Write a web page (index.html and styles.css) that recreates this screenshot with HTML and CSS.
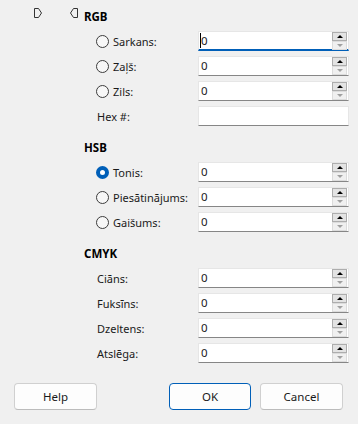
FILE: index.html
```html
<!DOCTYPE HTML>
<html>
	<head>
		<title>Color</title>
		<link rel="stylesheet" href="styles.css">
	</head>
	<body>
		<div class="dialog">
			<div class="section">
				<div class="heading top">
					<svg class="marker" width="8" height="10" viewBox="0 0 8 10"><path d="M0.5 0.5 H4.5 L7.5 5 L4.5 9.5 H0.5 Z" fill="none" stroke="#333" stroke-width="1"/></svg>
					<svg class="marker second" width="8" height="10" viewBox="0 0 8 10"><path d="M7.5 0.5 H3.5 L0.5 5 L3.5 9.5 H7.5 Z" fill="none" stroke="#333" stroke-width="1"/></svg>
					<span>RGB</span>
				</div>
				<div class="row">
					<div class="label"><span class="radio"></span>Sarkans:</div>
					<div class="field focus"><span class="caret"></span><span class="value">0</span><span class="spin"><span class="up"></span><span class="down"></span></span></div>
				</div>
				<div class="row">
					<div class="label"><span class="radio"></span>Zaļš:</div>
					<div class="field"><span class="value">0</span><span class="spin"><span class="up"></span><span class="down"></span></span></div>
				</div>
				<div class="row">
					<div class="label"><span class="radio"></span>Zils:</div>
					<div class="field"><span class="value">0</span><span class="spin"><span class="up"></span><span class="down"></span></span></div>
				</div>
				<div class="row">
					<div class="label plain">Hex #:</div>
					<div class="field"><span class="value"></span></div>
				</div>
			</div>

			<div class="section">
				<div class="heading"><span>HSB</span></div>
				<div class="row">
					<div class="label"><span class="radio on"></span>Tonis:</div>
					<div class="field"><span class="value">0</span><span class="spin"><span class="up"></span><span class="down"></span></span></div>
				</div>
				<div class="row">
					<div class="label"><span class="radio"></span>Piesātinājums:</div>
					<div class="field"><span class="value">0</span><span class="spin"><span class="up"></span><span class="down"></span></span></div>
				</div>
				<div class="row">
					<div class="label"><span class="radio"></span>Gaišums:</div>
					<div class="field"><span class="value">0</span><span class="spin"><span class="up"></span><span class="down"></span></span></div>
				</div>
			</div>

			<div class="section">
				<div class="heading"><span>CMYK</span></div>
				<div class="row">
					<div class="label plain">Ciāns:</div>
					<div class="field"><span class="value">0</span><span class="spin"><span class="up"></span><span class="down"></span></span></div>
				</div>
				<div class="row">
					<div class="label plain">Fuksīns:</div>
					<div class="field"><span class="value">0</span><span class="spin"><span class="up"></span><span class="down"></span></span></div>
				</div>
				<div class="row">
					<div class="label plain">Dzeltens:</div>
					<div class="field"><span class="value">0</span><span class="spin"><span class="up"></span><span class="down"></span></span></div>
				</div>
				<div class="row">
					<div class="label plain">Atslēga:</div>
					<div class="field"><span class="value">0</span><span class="spin"><span class="up"></span><span class="down"></span></span></div>
				</div>
			</div>

			<div class="buttons">
				<button class="btn">Help</button>
				<span class="spacer"></span>
				<button class="btn default">OK</button>
				<button class="btn">Cancel</button>
			</div>
		</div>
	</body>
</html>
```

FILE: styles.css
```css
body
{
	margin: 0;
	background-color: #f0f0f0;
	color: #000;
	font-family: "Noto Sans", "Open Sans", sans-serif;
	font-size: 11px;
}
.dialog
{
	width: 358px;
	height: 424px;
	padding-top: 6px;
	box-sizing: border-box;
}
.section
{
	margin-bottom: 11px;
}
.heading
{
	display: flex;
	align-items: center;
	height: 20px;
	padding-left: 84px;
	font-weight: bold;
	font-size: 11.5px;
}
.heading.top
{
	padding-left: 34px;
}
.marker
{
	align-self: flex-start;
	margin-top: 2px;
	margin-right: 28px;
}
.marker.second
{
	margin-right: 6px;
}
.row
{
	display: flex;
	align-items: center;
	height: 20px;
	margin-top: 5px;
	padding-left: 96px;
}
.label
{
	display: flex;
	align-items: center;
	width: 102px;
	white-space: nowrap;
	color: #1a1a1a;
}
.label.plain
{
	padding-left: 1px;
	width: 101px;
}
.radio
{
	width: 11px;
	height: 11px;
	border: 1px solid #3c3c3c;
	border-radius: 50%;
	background-color: #f7f7f7;
	margin-right: 4px;
}
.radio.on
{
	width: 5px;
	height: 5px;
	border: 4px solid #005fb8;
	background-color: #fff;
}
.field
{
	display: flex;
	align-items: flex-start;
	width: 151px;
	height: 20px;
	box-sizing: border-box;
	background-color: #fff;
	border: 1px solid #e6e6e6;
	border-bottom: 1px solid #868686;
	position: relative;
}
.field.focus
{
	border-bottom: 2px solid #005fb8;
}
.value
{
	flex: 1;
	padding-left: 2px;
	line-height: 17px;
	font-size: 11.5px;
	color: #1a1a1a;
}
.caret
{
	position: absolute;
	left: 1px;
	top: 1px;
	width: 1px;
	height: 15px;
	background-color: #000;
}
.spin
{
	display: flex;
	flex-direction: column;
	width: 15px;
	margin-right: 1px;
}
.spin span
{
	height: 9px;
	box-sizing: border-box;
	position: relative;
}
.up
{
	background-color: #e3e3e3;
	border: 1px solid #adadad;
}
.down
{
	background-color: #f0f0f0;
	border: 1px solid #dcdcdc;
}
.up::after, .down::after
{
	content: "";
	position: absolute;
	left: 4px;
	top: 2px;
	border-left: 3px solid transparent;
	border-right: 3px solid transparent;
}
.up::after
{
	border-bottom: 3px solid #000;
}
.down::after
{
	border-top: 3px solid #a0a0a0;
}
.buttons
{
	display: flex;
	padding: 0 15px 0 14px;
	margin-top: 20px;
	gap: 9px;
}
.spacer
{
	flex: 1;
}
.btn
{
	width: 83px;
	height: 27px;
	background-color: #fdfdfd;
	border: 1px solid #d0d0d0;
	border-bottom-color: #bcbcbc;
	border-radius: 4px;
	font-family: "Noto Sans", "Open Sans", sans-serif;
	font-size: 11.5px;
	color: #1a1a1a;
	padding: 0;
}
.btn.default
{
	width: 82px;
	border: 1px solid #005fb8;
}
```
